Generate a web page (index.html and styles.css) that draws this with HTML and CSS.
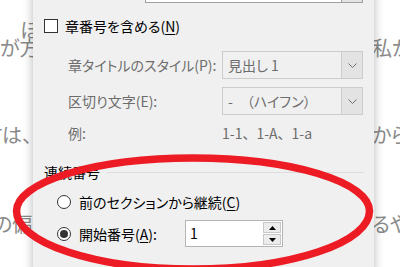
FILE: index.html
```html
<!DOCTYPE html>
<html lang="ja">
<head>
    <meta charset="UTF-8">
    <meta name="viewport" content="width=device-width, initial-scale=1.0">
    <title>ページ番号の書式</title>
    <link rel="stylesheet" href="styles.css">
</head>
<body>
    <!-- document text behind the dialog -->
    <div class="doc">
        <div class="line l1"><span class="left">ほ</span></div>
        <div class="line l2"><span class="left">が方</span><span class="right">私が</span></div>
        <div class="line l3"><span class="left">すは、</span><span class="right">から</span></div>
        <div class="line l4"><span class="left">の偏</span><span class="right">るや</span></div>
    </div>

    <div class="dialog">
        <div class="combo top-combo">
            <span></span>
            <div class="combo-btn"></div>
        </div>

        <div class="check-row">
            <span class="checkbox"></span>
            <span class="jp">章番号を含める(<u>N</u>)</span>
        </div>

        <div class="sub-grid">
            <span class="dis jp">章タイトルのスタイル(P):</span>
            <div class="combo">
                <span class="jp">見出し 1</span>
                <div class="combo-btn">
                    <svg width="9" height="5" viewBox="0 0 9 5"><polyline points="0.5,0.5 4.5,4.5 8.5,0.5" fill="none" stroke="#707070" stroke-width="1"/></svg>
                </div>
            </div>

            <span class="dis jp">区切り文字(E):</span>
            <div class="combo">
                <span class="jp">-　（ハイフン）</span>
                <div class="combo-btn">
                    <svg width="9" height="5" viewBox="0 0 9 5"><polyline points="0.5,0.5 4.5,4.5 8.5,0.5" fill="none" stroke="#707070" stroke-width="1"/></svg>
                </div>
            </div>

            <span class="dis jp">例:</span>
            <span class="dis example">1-1、1-A、1-a</span>
        </div>

        <div class="group-head">
            <span class="jp">連続番号</span>
            <div class="rule"></div>
        </div>

        <div class="radio-row">
            <span class="radio"></span>
            <span class="jp">前のセクションから継続(<u>C</u>)</span>
        </div>
        <div class="radio-row start">
            <span class="radio on"></span>
            <span class="jp num-label">開始番号(<u>A</u>):</span>
            <div class="spin">
                <span class="spin-val">1</span>
                <div class="spin-btns">
                    <div class="spin-btn"><svg width="7" height="4" viewBox="0 0 7 4"><polygon points="0,4 3.5,0 7,4" fill="#000"/></svg></div>
                    <div class="spin-btn"><svg width="7" height="4" viewBox="0 0 7 4"><polygon points="0,0 3.5,4 7,0" fill="#000"/></svg></div>
                </div>
            </div>
        </div>
    </div>

    <!-- red hand-drawn mark, a bit flatter on top than below -->
    <svg class="mark" width="400" height="267" viewBox="0 0 400 267">
        <path d="M 16.5 211 A 176.5 53 0 0 1 369.5 211 A 176.5 58 0 0 1 16.5 211 Z" fill="none" stroke="#ed1c24" stroke-width="7.5"/>
    </svg>
</body>
</html>
```

FILE: styles.css
```css
body {
    margin: 0;
    width: 400px;
    height: 267px;
    overflow: hidden;
    position: relative;
    background-color: #fff;
    font-family: "Noto Sans CJK JP", "Liberation Sans", sans-serif;
}

.doc {
    font-size: 20px;
    line-height: 20px;
    color: #8a8a8a;
    font-feature-settings: "palt";
}
.line {
    display: flex;
    white-space: nowrap;
}
.line .left {
    width: 372px;
    flex: none;
}
.l1 {
    margin-top: 20px;
}
.l1 .left {
    padding-left: 20px;
    box-sizing: border-box;
}
.l2 {
    margin-top: -2px;
}
.l3 {
    margin-top: 67px;
}
.l3 .left {
    text-indent: -16px;
}
.l4 {
    margin-top: 69px;
}
.l4 .left {
    text-indent: -7px;
}

.dialog {
    position: absolute;
    left: 33px;
    top: -23px;
    width: 341px;
    height: 300px;
    background-color: #f0f0f0;
    box-shadow: 0 0 10px rgba(0, 0, 0, 0.28);
    font-size: 14px;
    color: #000;
}
.jp {
    font-feature-settings: "palt";
}
u {
    text-underline-offset: 2px;
}

.combo {
    display: flex;
    align-items: center;
    height: 28px;
    box-sizing: border-box;
    border: 1px solid #cccccc;
    background-color: #f0f0f0;
    color: #6d6d6d;
}
.combo span {
    flex: 1;
    padding-left: 5px;
    white-space: nowrap;
}
.combo-btn {
    width: 20px;
    height: 100%;
    border-left: 1px solid #cccccc;
    background-color: #e3e3e3;
    display: flex;
    align-items: center;
    justify-content: center;
}
.top-combo {
    margin-left: 112px;
    width: 218px;
    height: 26px;
    background-color: #fff;
    border-color: #a0a0a0;
}
.top-combo .combo-btn {
    border-left-color: #a0a0a0;
}

.check-row {
    display: flex;
    align-items: center;
    gap: 7px;
    height: 20px;
    margin-top: 13px;
    padding-left: 11px;
}
.checkbox {
    width: 14px;
    height: 14px;
    box-sizing: border-box;
    border: 1px solid #333;
    background-color: #fff;
}

.sub-grid {
    display: grid;
    grid-template-columns: 154px 141px;
    grid-template-rows: 28px 28px 20px;
    row-gap: 8px;
    align-items: center;
    margin-top: 15px;
    padding-left: 35px;
}
.dis {
    color: #6d6d6d;
    white-space: nowrap;
}

.group-head {
    display: flex;
    align-items: center;
    gap: 7px;
    height: 16px;
    margin-top: 21px;
    padding-left: 11px;
    margin-right: 10px;
}
.rule {
    flex: 1;
    height: 1px;
    background-color: #dcdcdc;
}

.radio-row {
    display: flex;
    align-items: center;
    gap: 8px;
    height: 20px;
    margin-top: 12px;
    padding-left: 24px;
}
.radio-row.start {
    height: 27px;
    margin-top: 8px;
}
.radio {
    width: 14px;
    height: 14px;
    box-sizing: border-box;
    border: 1px solid #333;
    border-radius: 50%;
    background-color: #fff;
    display: flex;
    align-items: center;
    justify-content: center;
}
.radio.on::after {
    content: "";
    width: 8px;
    height: 8px;
    border-radius: 50%;
    background-color: #333;
}
.num-label {
    width: 98px;
}

.spin {
    display: flex;
    width: 98px;
    height: 27px;
    box-sizing: border-box;
    border: 1px solid #b4b4b4;
    background-color: #fff;
}
.spin-val {
    flex: 1;
    padding-left: 4px;
    line-height: 25px;
}
.spin-btns {
    width: 18px;
    display: flex;
    flex-direction: column;
    gap: 1px;
    padding: 1px 1px 1px 0;
}
.spin-btn {
    flex: 1;
    border: 1px solid #c8c8c8;
    background-color: #ececec;
    display: flex;
    align-items: center;
    justify-content: center;
}

.mark {
    position: absolute;
    left: 0;
    top: 0;
    pointer-events: none;
}
```
